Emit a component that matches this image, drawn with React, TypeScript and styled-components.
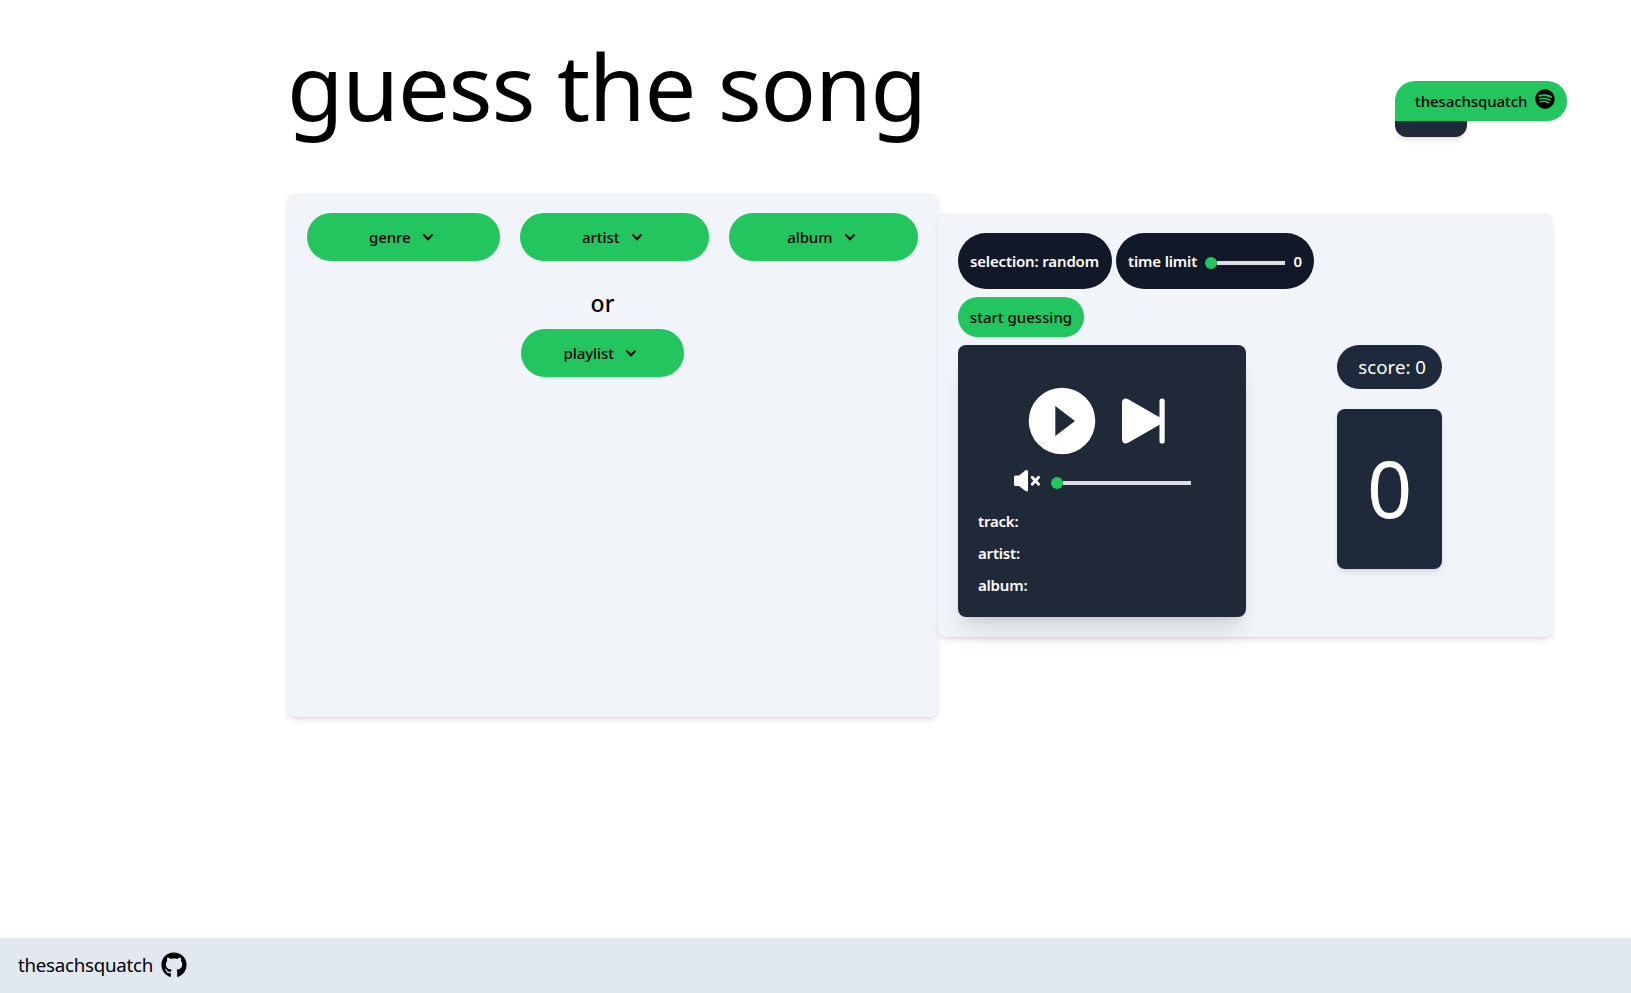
import React from "react";
import styled, { createGlobalStyle } from "styled-components";
import { FaGithub, FaSpotify } from "react-icons/fa";

const GlobalStyle = createGlobalStyle`
  *, *::before, *::after { box-sizing: border-box; }
  body {
    margin: 0;
    background: #fff;
    color: #000;
    font-family: "Segoe UI", "Noto Sans", sans-serif;
    font-size: 15px;
    line-height: 24px;
    letter-spacing: -0.08px;
  }
  h1, p { margin: 0; font-weight: 400; }
  button { font: inherit; letter-spacing: inherit; color: inherit; border: 0; padding: 0; }
  svg { display: block; flex: none; }
`;

const GREEN = "#22c55e";

const Page = styled.div`
  min-height: 993px;
  display: flex;
  flex-direction: column;
`;

const Header = styled.header`
  display: flex;
  justify-content: space-between;
  align-items: flex-start;
  height: 193px;
  padding: 38px 64px 0 287px;
`;

const Title = styled.h1`
  font-size: 92px;
  line-height: 96px;
  letter-spacing: -1.25px;
  white-space: nowrap;
`;

const Account = styled.div`
  width: 172px;
  margin-top: 43px;
`;

const AccountButton = styled.button`
  display: flex;
  align-items: center;
  justify-content: space-between;
  width: 100%;
  height: 40px;
  padding: 0 12px 0 20px;
  border-radius: 20px 20px 20px 0;
  background: ${GREEN};
  font-weight: 500;

  svg { margin-bottom: 4px; }
`;

const AccountMenu = styled.div`
  width: 72px;
  height: 16px;
  border-radius: 0 0 12px 12px;
  background: #1f2937;
  box-shadow: 0 4px 6px -1px rgba(0, 0, 0, 0.1), 0 2px 4px -2px rgba(0, 0, 0, 0.1);
`;

const Main = styled.main`
  flex: 1;
  display: flex;
  align-items: flex-start;
  padding-left: 287px;
`;

const Panel = styled.section<{ $width: number; $height: number; $drop?: number }>`
  width: ${(p) => p.$width}px;
  height: ${(p) => p.$height}px;
  margin-top: ${(p) => p.$drop ?? 0}px;
  padding: 20px;
  border-radius: 8px;
  background: #f1f5f9;
  box-shadow: 0 4px 6px -1px rgba(0, 0, 0, 0.1), 0 2px 4px -2px rgba(0, 0, 0, 0.1);
`;

const FilterRow = styled.div`
  display: flex;
  gap: 20px;
`;

const PlaylistGroup = styled.div`
  display: flex;
  flex-direction: column;
  align-items: center;
  margin-top: 26px;
  padding-right: 20px;
`;

const Or = styled.p`
  height: 42px;
  font-size: 23px;
  line-height: 32px;
  letter-spacing: 0;
  font-weight: 500;
`;

const FilterButton = styled.button<{ $width: number }>`
  display: flex;
  align-items: center;
  justify-content: center;
  gap: 9.5px;
  width: ${(p) => p.$width}px;
  height: 48px;
  padding-right: 2px;
  border-radius: 24px;
  background: ${GREEN};
  font-weight: 500;
`;

const ChipRow = styled.div`
  display: flex;
  gap: 4px;
`;

const Chip = styled.div<{ $width: number }>`
  display: flex;
  align-items: center;
  justify-content: space-between;
  width: ${(p) => p.$width}px;
  height: 56px;
  padding: 0 12px;
  border-radius: 28px;
  background: #111827;
  color: #fff;
  font-weight: 600;
  letter-spacing: -0.15px;
  white-space: nowrap;
`;

const StartButton = styled.button`
  display: block;
  width: 126px;
  height: 40px;
  margin: 8px 0;
  border-radius: 20px;
  background: ${GREEN};
  font-weight: 500;
  letter-spacing: 0;
`;

const Slider = styled.div<{ $width: number }>`
  display: flex;
  align-items: center;
  width: ${(p) => p.$width}px;
  height: 12px;
  margin-top: 3px;

  &::before {
    content: "";
    width: 12px;
    height: 12px;
    border-radius: 50%;
    background: ${GREEN};
  }
  &::after {
    content: "";
    flex: 1;
    height: 4px;
    background: #dedce4;
  }
`;

const GameRow = styled.div`
  display: flex;
  align-items: flex-start;
  gap: 91px;
`;

const Player = styled.div`
  width: 288px;
  height: 272px;
  padding: 42px 20px 0;
  border-radius: 8px;
  background: #1f2937;
  color: #fff;
  box-shadow: 0 20px 25px -5px rgba(0, 0, 0, 0.1), 0 8px 10px -6px rgba(0, 0, 0, 0.1);
`;

const Controls = styled.div`
  display: flex;
  align-items: center;
  gap: 26px;
  padding-left: 50px;
`;

const VolumeRow = styled.div`
  display: flex;
  align-items: center;
  gap: 10px;
  height: 24px;
  margin-top: 14px;
  padding-left: 35px;
`;

const TrackInfo = styled.div`
  display: flex;
  flex-direction: column;
  gap: 8px;
  margin-top: 16px;
  font-weight: 600;
  letter-spacing: -0.2px;
`;

const ScoreColumn = styled.div`
  display: flex;
  flex-direction: column;
  gap: 20px;
  width: 105px;
  color: #fff;
`;

const Score = styled.div`
  height: 44px;
  padding-right: 16px;
  border-radius: 22px;
  background: #1e293b;
  font-size: 18.7px;
  line-height: 44px;
  letter-spacing: 0;
  text-align: right;
`;

const Countdown = styled.div`
  height: 160px;
  border-radius: 8px;
  background: #1e293b;
  box-shadow: 0 4px 6px -1px rgba(0, 0, 0, 0.1), 0 2px 4px -2px rgba(0, 0, 0, 0.1);
  font-size: 79px;
  line-height: 158px;
  letter-spacing: 0;
  text-align: center;
`;

const Footer = styled.footer`
  display: flex;
  align-items: center;
  gap: 8px;
  height: 55px;
  padding: 0 0 2px 18px;
  background: #e2e8f0;
  font-size: 18.7px;
  letter-spacing: -0.25px;
`;

const Chevron = () => (
  <svg width="16" height="16" viewBox="0 0 16 16" fill="none" stroke="#000" strokeWidth="2.1">
    <path d="M3.4 5.6 8 10.2l4.6-4.6" />
  </svg>
);

const PlayIcon = () => (
  <svg width="68" height="68" viewBox="0 0 68 68">
    <path
      fill="#fff"
      fillRule="evenodd"
      d="M34 .7a33.3 33.3 0 1 1 0 66.6A33.3 33.3 0 0 1 34 .7ZM27.3 19v30L47 34Z"
    />
  </svg>
);

const SkipIcon = () => (
  <svg width="44" height="46" viewBox="0 0 44 46" fill="#fff">
    <path d="M0 4.500C0 1 3.200-.6 6.200 1.200L38 19.500V26.500L6.200 44.800C3.200 46.500 0 45 0 41.500Z" />
    <rect x="37.500" y=".5" width="5.200" height="45" rx="2.600" />
  </svg>
);

const MutedIcon = () => (
  <svg width="28" height="24" viewBox="0 0 28 24">
    <path fill="#fff" d="M2.500 6.500H6L12.500 1.300Q15 .3 15 2.500V21Q15 23.200 12.500 22L6 17H2.500Q1 17 1 15.500V8Q1 6.500 2.500 6.500Z" />
    <path stroke="#fff" strokeWidth="2.800" strokeLinecap="round" d="m19.200 8.300 6.400 6.900m0-6.900-6.400 6.900" />
  </svg>
);

const Filter = ({ label, width }: { label: string; width: number }) => (
  <FilterButton $width={width}>
    {label}
    <Chevron />
  </FilterButton>
);

export default function App() {
  return (
    <Page>
      <GlobalStyle />
      <Header>
        <Title>guess the song</Title>
        <Account>
          <AccountButton>
            thesachsquatch
            <FaSpotify size={20} />
          </AccountButton>
          <AccountMenu />
        </Account>
      </Header>
      <Main>
        <Panel $width={651} $height={524}>
          <FilterRow>
            <Filter label="genre" width={193} />
            <Filter label="artist" width={189} />
            <Filter label="album" width={189} />
          </FilterRow>
          <PlaylistGroup>
            <Or>or</Or>
            <Filter label="playlist" width={163} />
          </PlaylistGroup>
        </Panel>
        <Panel $width={615} $height={424} $drop={20}>
          <ChipRow>
            <Chip $width={154}>selection: random</Chip>
            <Chip $width={198}>
              time limit
              <Slider $width={80} />0
            </Chip>
          </ChipRow>
          <StartButton>start guessing</StartButton>
          <GameRow>
            <Player>
              <Controls>
                <PlayIcon />
                <SkipIcon />
              </Controls>
              <VolumeRow>
                <MutedIcon />
                <Slider $width={140} />
              </VolumeRow>
              <TrackInfo>
                <span>track:</span>
                <span>artist:</span>
                <span>album:</span>
              </TrackInfo>
            </Player>
            <ScoreColumn>
              <Score>score: 0</Score>
              <Countdown>0</Countdown>
            </ScoreColumn>
          </GameRow>
        </Panel>
      </Main>
      <Footer>
        thesachsquatch
        <FaGithub size={26} />
      </Footer>
    </Page>
  );
}
